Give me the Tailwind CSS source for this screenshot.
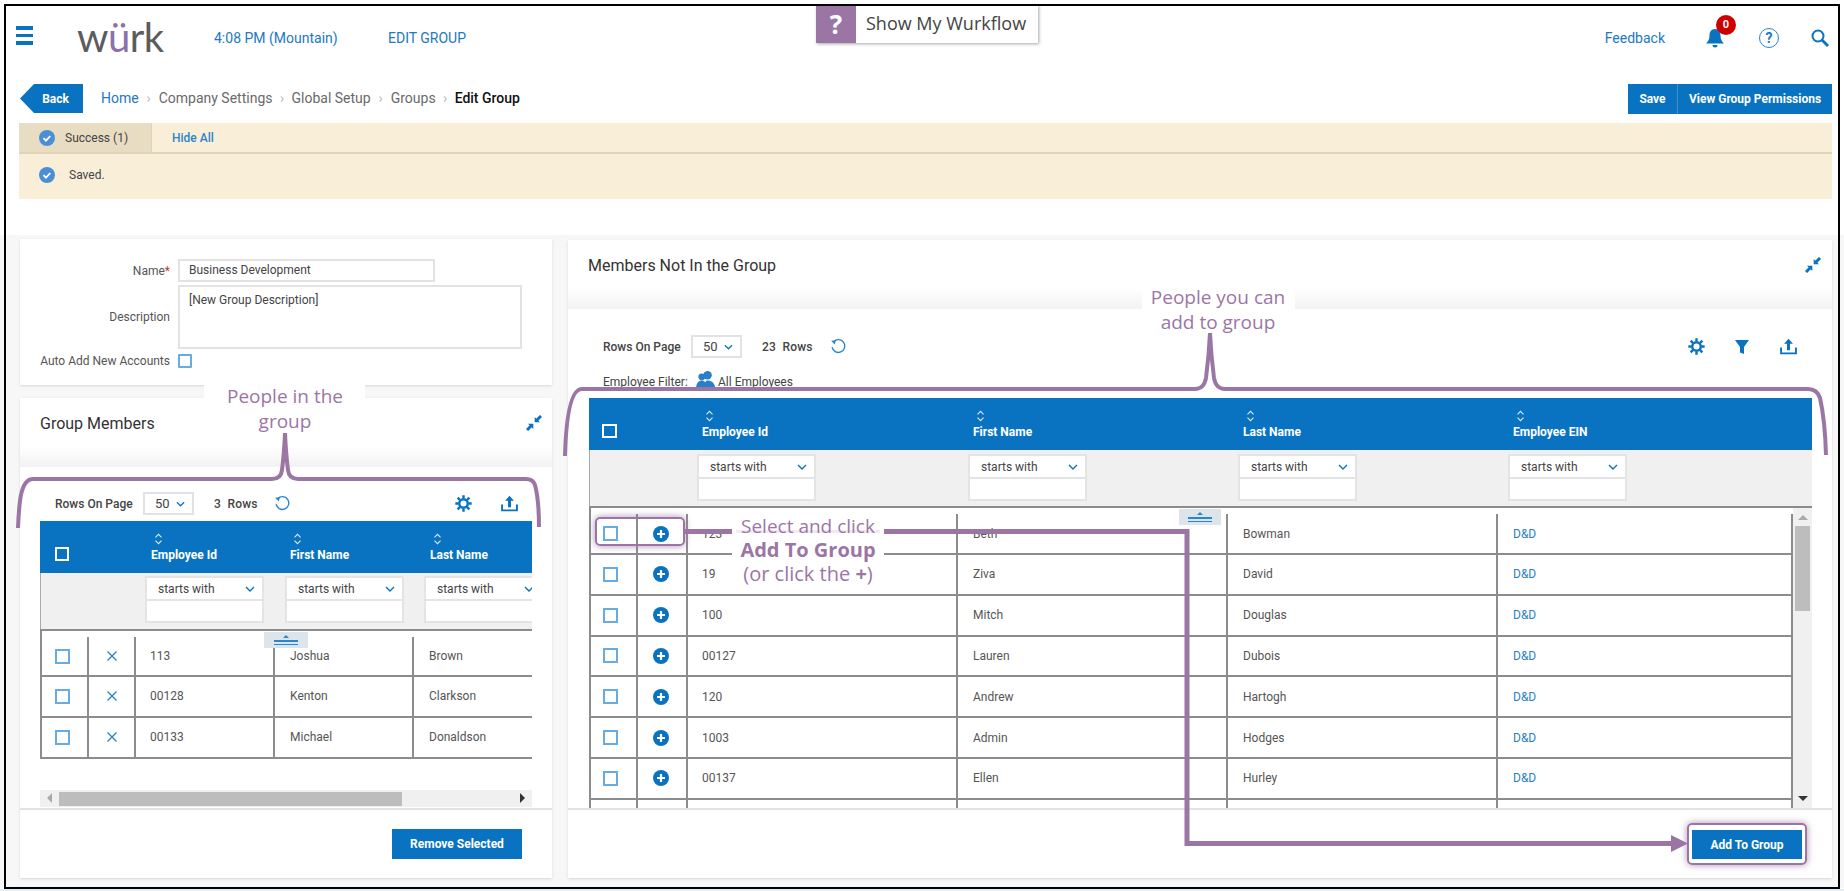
<!DOCTYPE html>
<html>
<head>
<meta charset="utf-8">
<script src="https://cdn.jsdelivr.net/npm/@tailwindcss/browser@4"></script>
</head>
<body class="m-0">
<svg class="hidden">
  <symbol id="check" viewBox="0 0 16 16"><circle cx="8" cy="8" r="8" fill="#4a8fd6"/><path d="M4.500 8.200l2.400 2.400 4.400-4.600" fill="none" stroke="#fff" stroke-width="1.800"/></symbol>
  <symbol id="pin" viewBox="0 0 16 16"><path d="M8.700 7.300V2l5.300 5.300z" fill="#0a73c1"/><path d="M11 5l4-4" stroke="#0a73c1" stroke-width="3"/><path d="M7.300 8.700V14L2 8.700z" fill="#0a73c1"/><path d="M5 11l-4 4" stroke="#0a73c1" stroke-width="3"/></symbol>
  <symbol id="gear" viewBox="0 0 16 16"><circle cx="8" cy="8" r="4" fill="none" stroke="#0a73c1" stroke-width="2.300"/><path d="M8 .3v3M8 12.700v3M.3 8h3M12.700 8h3M2.500 2.500l2.300 2.300M11.200 11.200l2.300 2.300M2.500 13.500l2.300-2.300M11.200 4.800l2.300-2.300" stroke="#0a73c1" stroke-width="2.300"/></symbol>
  <symbol id="upload" viewBox="0 0 16 16"><path d="M1 9v5.500h14V9" fill="none" stroke="#0a73c1" stroke-width="1.800"/><path d="M8 11.500V4" stroke="#0a73c1" stroke-width="2.800"/><path d="M3.800 5.500L8 .8l4.200 4.700z" fill="#0a73c1"/></symbol>
  <symbol id="refresh" viewBox="0 0 16 16"><path d="M3.500 3.500A6 6 0 1 1 2 8.500" fill="none" stroke="#2a86cf" stroke-width="1.300"/><path d="M1 2.500l4.500-.5-1 4.200z" fill="#2a86cf"/></symbol>
  <symbol id="sort" viewBox="0 0 10 14"><path d="M1.500 5L5 1.500 8.500 5M1.500 9L5 12.500 8.500 9" fill="none" stroke="#dbe9f5" stroke-width="1.300"/></symbol>
  <symbol id="chev" viewBox="0 0 10 6"><path d="M1 1l4 4 4-4" fill="none" stroke="#0a73c1" stroke-width="1.400"/></symbol>
  <symbol id="plus" viewBox="0 0 16 16"><circle cx="8" cy="8" r="8" fill="#0a73c1"/><path d="M8 4v8M4 8h8" stroke="#fff" stroke-width="2.200"/></symbol>
  <symbol id="x" viewBox="0 0 12 12"><path d="M1.500 1.500l9 9M10.500 1.500l-9 9" stroke="#2a86cf" stroke-width="1.400"/></symbol>
</svg>

<div class="relative w-[1844px] h-[891px] overflow-hidden bg-white font-['Roboto',sans-serif] text-[12px] text-[#555]">

  <header class="flex items-center h-[66px] mt-[5px] pl-[16px] pr-[15px] text-[14px] text-[#2278c3]">
    <div class="w-[17px] flex flex-col gap-[4px] mr-[44px] -mt-[5px]">
      <span class="block h-[3.500px] bg-[#0a73c1]"></span><span class="block h-[3.500px] bg-[#0a73c1]"></span><span class="block h-[3.500px] bg-[#0a73c1]"></span>
    </div>
    <div class="w-[137px] font-['Lato',sans-serif] font-normal text-[40px] tracking-[-.5px] leading-none text-[#5c5c5c] -mt-[3px]">w<span class="text-[#8b72ad]">ü</span>rk</div>
    <div class="w-[174px]">4:08 PM (Mountain)</div>
    <div>EDIT GROUP</div>
    <div class="ml-auto mr-[40px]">Feedback</div>
    <div class="relative w-[20px] h-[20px] mr-[34px]">
      <svg viewBox="0 0 20 20" class="w-[20px] h-[20px]"><path d="M10 1c4 0 5.500 3 5.500 6.500 0 4 1.500 6 3.500 8H1c2-2 3.500-4 3.500-8C4.500 4 6 1 10 1z" fill="#0a73c1"/><path d="M7.500 17h5a2.500 2.500 0 0 1-5 0z" fill="#0a73c1"/></svg>
      <span class="absolute -top-[13px] left-[11px] w-[20px] h-[20px] rounded-full bg-[#cc0000] text-white text-[11px] font-bold flex items-center justify-center">0</span>
    </div>
    <div class="w-[20px] h-[20px] rounded-full border-[1.500px] border-[#2a86cf] flex items-center justify-center font-bold text-[14px] mr-[32px]">?</div>
    <svg viewBox="0 0 18 18" class="w-[18px] h-[18px]"><circle cx="7" cy="7" r="5.500" fill="none" stroke="#0a73c1" stroke-width="2"/><path d="M11 11l6 6" stroke="#0a73c1" stroke-width="2.800"/></svg>
  </header>

  <div class="flex items-center h-[30px] mt-[13px] pl-[20px] pr-[12px] text-[14px]">
    <div class="w-[63px] h-[29px] bg-[#0a73c1] text-white text-[12px] font-bold flex items-center justify-center pl-[8px] -mt-[1px] [clip-path:polygon(14px_0,100%_0,100%_100%,14px_100%,0_50%)]">Back</div>
    <nav class="flex items-center ml-[18px] -mt-[1px] text-[#6a6a6a]">
      <span class="text-[#2278c3]">Home</span><span class="w-[20px] text-center text-[#bbb]">›</span>
      <span>Company Settings</span><span class="w-[19px] text-center text-[#bbb]">›</span>
      <span>Global Setup</span><span class="w-[20px] text-center text-[#bbb]">›</span>
      <span>Groups</span><span class="w-[19px] text-center text-[#bbb]">›</span>
      <span class="font-medium text-[#111]">Edit Group</span>
    </nav>
    <div class="ml-auto flex h-[30px] bg-[#0a73c1] text-white font-bold text-[12px]">
      <div class="w-[50px] flex items-center justify-center border-r border-[#3f8fcf] pb-[1px]">Save</div>
      <div class="w-[154px] flex items-center justify-center pb-[1px]">View Group Permissions</div>
    </div>
  </div>

  <section class="ml-[19px] mr-[12px] mt-[9px] h-[76px] bg-[#f9efd9]">
    <div class="flex items-center h-[31px] border-b-2 border-[#dfd3b8]">
      <div class="w-[133px] h-full bg-[#e8dcc2] border-r border-[#dfd3b8] flex items-center pl-[20px] gap-[10px] text-[#444]">
        <svg class="w-[16px] h-[16px]"><use href="#check"/></svg>Success (1)
      </div>
      <div class="ml-[20px] font-medium text-[#2a86c8]">Hide All</div>
    </div>
    <div class="flex items-center pl-[20px] gap-[14px] mt-[12px] text-[#444]">
      <svg class="w-[16px] h-[16px]"><use href="#check"/></svg>Saved.
    </div>
  </section>

  <main class="mt-[36px] h-[653px] bg-[#f7f7f7] pt-[4px] pl-[20px] pr-[12px] flex gap-[16px]">
    <!-- left column -->
    <div class="w-[532px] flex flex-col gap-[13px]">
      <div class="h-[146px] bg-white shadow-sm relative">
        <div class="flex items-start pt-[20px]">
          <div class="w-[150px] text-right h-[23px] leading-[25px] text-[#555]">Name<span class="text-[#c0392b]">*</span></div>
          <div class="ml-[8px] w-[257px] h-[23px] border-2 border-[#e2e2e2] pl-[9px] leading-[19px] text-[#444]">Business Development</div>
        </div>
        <div class="flex items-center mt-[3px]">
          <div class="w-[150px] text-right">Description</div>
          <div class="ml-[8px] w-[344px] h-[64px] border-2 border-[#e2e2e2] pl-[9px] pt-[3px] text-[#444] leading-[20px]">[New Group Description]</div>
        </div>
        <div class="flex items-center mt-[3px]">
          <div class="w-[150px] text-right whitespace-nowrap">Auto Add New Accounts</div>
          <div class="ml-[8px] w-[14px] h-[14px] border-2 border-[#66abe3] rounded-[1px]"></div>
        </div>
      </div>

      <div class="h-[480px] bg-white shadow-sm flex flex-col">
        <div class="h-[69px] flex items-start justify-between pl-[20px] pr-[10px] pt-[16px] bg-gradient-to-b from-white from-70% to-[#f2f2f2]">
          <h2 class="text-[16px] text-[#333] leading-[20px]">Group Members</h2>
          <svg class="w-[16px] h-[16px] mt-[1px]"><use href="#pin"/></svg>
        </div>
        <div class="flex items-center h-[23px] mt-[25px] ml-[35px] mr-[29px]">
          <span class="font-medium text-[#444] w-[88px]">Rows On Page</span>
          <div class="w-[51px] h-[23px] border-2 border-[#e2e2e2] flex items-center pl-[10px] gap-[6px] text-[#444] text-[13px]">50<svg class="w-[9px] h-[6px]"><use href="#chev"/></svg></div>
          <span class="ml-[20px] text-[#444] font-medium tracking-[.2px] w-[60px]">3&nbsp;&nbsp;Rows</span>
          <svg class="w-[17px] h-[17px]"><use href="#refresh"/></svg>
          <svg class="w-[17px] h-[17px] ml-auto mr-[29px]"><use href="#gear"/></svg>
          <svg class="w-[17px] h-[17px] mr-[5px]"><use href="#upload"/></svg>
        </div>
        <div class="w-[492px] ml-[20px] mt-[6px] overflow-hidden relative">
          <div class="grid grid-cols-[95px_140px_139px_118px] h-[52px] bg-[#0a73c1] text-white font-bold pt-[12px]">
            <div class="pl-[15px] pt-[14px]"><div class="w-[14px] h-[14px] border-2 border-white"></div></div>
            <div class="pl-[16px]"><svg class="w-[9px] h-[12px] ml-[3px] block"><use href="#sort"/></svg><div class="mt-[3px] leading-[14px]">Employee Id</div></div>
            <div class="pl-[15px]"><svg class="w-[9px] h-[12px] ml-[3px] block"><use href="#sort"/></svg><div class="mt-[3px] leading-[14px]">First Name</div></div>
            <div class="pl-[16px]"><svg class="w-[9px] h-[12px] ml-[3px] block"><use href="#sort"/></svg><div class="mt-[3px] leading-[14px]">Last Name</div></div>
          </div>
          <div class="grid grid-cols-[95px_140px_139px_118px] h-[56px] bg-[#f0f0f0] pt-[3px] text-[#444] border-l border-[#aaa]">
            <div></div>
            <div class="pl-[9px]"><div class="w-[119px] h-[47px] bg-white border-2 border-[#e4e4e4]"><div class="h-[23px] border-b-2 border-[#e4e4e4] flex items-center justify-between pl-[11px] pr-[7px]">starts with<svg class="w-[10px] h-[6px]"><use href="#chev"/></svg></div></div></div>
            <div class="pl-[9px]"><div class="w-[119px] h-[47px] bg-white border-2 border-[#e4e4e4]"><div class="h-[23px] border-b-2 border-[#e4e4e4] flex items-center justify-between pl-[11px] pr-[7px]">starts with<svg class="w-[10px] h-[6px]"><use href="#chev"/></svg></div></div></div>
            <div class="pl-[9px]"><div class="w-[119px] h-[47px] bg-white border-2 border-[#e4e4e4]"><div class="h-[23px] border-b-2 border-[#e4e4e4] flex items-center justify-between pl-[11px] pr-[7px]">starts with<svg class="w-[10px] h-[6px]"><use href="#chev"/></svg></div></div></div>
          </div>
          <div class="border-t-2 border-l-2 border-[#8c8c8c] [&>div]:grid [&>div]:grid-cols-[47px_47px_139px_139px_118px] [&>div]:border-b-2 [&>div]:border-[#8c8c8c] [&>div]:h-[40.800px] [&>div>div]:flex [&>div>div]:items-center [&>div>div]:border-r-2 [&>div>div]:border-[#8c8c8c]">
            <div class="!h-[46px] pt-[6px]"><div class="pl-[13px]"><span class="block w-[15px] h-[15px] border-2 border-[#66abe3]"></span></div><div class="justify-center"><svg class="w-[12px] h-[12px]"><use href="#x"/></svg></div><div class="pl-[14px]">113</div><div class="pl-[15px]">Joshua</div><div class="pl-[15px] !border-r-0">Brown</div></div>
            <div><div class="pl-[13px]"><span class="block w-[15px] h-[15px] border-2 border-[#66abe3]"></span></div><div class="justify-center"><svg class="w-[12px] h-[12px]"><use href="#x"/></svg></div><div class="pl-[14px]">00128</div><div class="pl-[15px]">Kenton</div><div class="pl-[15px] !border-r-0">Clarkson</div></div>
            <div><div class="pl-[13px]"><span class="block w-[15px] h-[15px] border-2 border-[#66abe3]"></span></div><div class="justify-center"><svg class="w-[12px] h-[12px]"><use href="#x"/></svg></div><div class="pl-[14px]">00133</div><div class="pl-[15px]">Michael</div><div class="pl-[15px] !border-r-0">Donaldson</div></div>
          </div>
          <div class="absolute left-[224px] top-[111px] w-[44px] h-[16px] bg-[#dde5ec] flex flex-col items-center justify-center gap-[2px]">
            <span class="block w-0 h-0 border-x-[3px] border-x-transparent border-b-[3px] border-b-[#2a86cf]"></span><span class="block w-[24px] h-[1.500px] bg-[#2a86cf]"></span><span class="block w-[24px] h-[1.500px] bg-[#2a86cf]"></span>
          </div>
        </div>
        <div class="w-[492px] ml-[20px] mt-[31px] h-[17px] bg-[#f0f0f0] flex items-center justify-between relative">
          <span class="ml-[7px] w-0 h-0 border-y-[5px] border-y-transparent border-r-[5px] border-r-[#aaa]"></span>
          <span class="absolute left-[19px] top-[2px] w-[343px] h-[14px] bg-[#bdbdbd]"></span>
          <span class="mr-[7px] w-0 h-0 border-y-[5px] border-y-transparent border-l-[5px] border-l-[#333]"></span>
        </div>
        <div class="flex-1 mt-[1px] border-t-2 border-[#e2e2e2] flex justify-end items-start pt-[19px] pr-[30px]">
          <button class="w-[130px] h-[30px] bg-[#0a73c1] text-white font-bold text-[12px]">Remove Selected</button>
        </div>
      </div>
    </div>

    <!-- right column -->
    <div class="w-[1264px] h-[638px] mt-[1px] bg-white shadow-sm flex flex-col">
      <div class="h-[69px] flex items-start justify-between pl-[20px] pr-[11px] pt-[16px] bg-gradient-to-b from-white from-70% to-[#f2f2f2]">
        <h2 class="text-[16px] text-[#333] leading-[20px]">Members Not In the Group</h2>
        <svg class="w-[16px] h-[16px] mt-[1px]"><use href="#pin"/></svg>
      </div>
      <div class="flex items-center h-[23px] mt-[26px] ml-[35px] mr-[35px]">
        <span class="font-medium text-[#444] w-[88px]">Rows On Page</span>
        <div class="w-[51px] h-[23px] border-2 border-[#e2e2e2] flex items-center pl-[10px] gap-[6px] text-[#444] text-[13px]">50<svg class="w-[9px] h-[6px]"><use href="#chev"/></svg></div>
        <span class="ml-[20px] text-[#444] font-medium tracking-[.2px] w-[68px]">23&nbsp;&nbsp;Rows</span>
        <svg class="w-[17px] h-[17px]"><use href="#refresh"/></svg>
        <svg class="w-[17px] h-[17px] ml-auto mr-[29px]"><use href="#gear"/></svg>
        <svg viewBox="0 0 16 16" class="w-[16px] h-[16px] mr-[30px]"><path d="M1 1h14L10 8v7l-4-1.500V8z" fill="#0a73c1"/></svg>
        <svg class="w-[17px] h-[17px]"><use href="#upload"/></svg>
      </div>
      <div class="flex items-center ml-[35px] h-[20px] mt-[14px] mb-[6px] text-[#444]">
        <span class="w-[92px]">Employee Filter:</span>
        <svg viewBox="0 0 20 17" class="w-[21px] h-[18px] -mt-[4px]"><circle cx="12" cy="4" r="4" fill="#2a7fc9"/><circle cx="6.500" cy="5.500" r="3.300" fill="#2a7fc9"/><path d="M1 17c0-6 3-8 5.500-8S11 11 11 17zM9 17c0-6 1-8 3-8 3.500 0 7 2 7.500 8z" fill="#2a7fc9"/></svg>
        <span class="ml-[2px]">All Employees</span>
      </div>
      <div class="w-[1223px] ml-[21px] relative">
        <div class="grid grid-cols-[98px_271px_270px_270px_314px] h-[52px] bg-[#0a73c1] text-white font-bold pt-[12px]">
          <div class="pl-[13px] pt-[14px]"><div class="w-[15px] h-[14px] border-2 border-white"></div></div>
          <div class="pl-[15px]"><svg class="w-[9px] h-[12px] ml-[3px] block"><use href="#sort"/></svg><div class="mt-[3px] leading-[14px]">Employee Id</div></div>
          <div class="pl-[15px]"><svg class="w-[9px] h-[12px] ml-[3px] block"><use href="#sort"/></svg><div class="mt-[3px] leading-[14px]">First Name</div></div>
          <div class="pl-[15px]"><svg class="w-[9px] h-[12px] ml-[3px] block"><use href="#sort"/></svg><div class="mt-[3px] leading-[14px]">Last Name</div></div>
          <div class="pl-[15px]"><svg class="w-[9px] h-[12px] ml-[3px] block"><use href="#sort"/></svg><div class="mt-[3px] leading-[14px]">Employee EIN</div></div>
        </div>
        <div class="grid grid-cols-[98px_271px_270px_270px_314px] h-[56px] bg-[#f0f0f0] pt-[4px] text-[#444] border-l border-[#aaa]">
          <div></div>
          <div class="pl-[9px]"><div class="w-[119px] h-[47px] bg-white border-2 border-[#e4e4e4]"><div class="h-[23px] border-b-2 border-[#e4e4e4] flex items-center justify-between pl-[11px] pr-[7px]">starts with<svg class="w-[10px] h-[6px]"><use href="#chev"/></svg></div></div></div>
          <div class="pl-[9px]"><div class="w-[119px] h-[47px] bg-white border-2 border-[#e4e4e4]"><div class="h-[23px] border-b-2 border-[#e4e4e4] flex items-center justify-between pl-[11px] pr-[7px]">starts with<svg class="w-[10px] h-[6px]"><use href="#chev"/></svg></div></div></div>
          <div class="pl-[9px]"><div class="w-[119px] h-[47px] bg-white border-2 border-[#e4e4e4]"><div class="h-[23px] border-b-2 border-[#e4e4e4] flex items-center justify-between pl-[11px] pr-[7px]">starts with<svg class="w-[10px] h-[6px]"><use href="#chev"/></svg></div></div></div>
          <div class="pl-[9px]"><div class="w-[119px] h-[47px] bg-white border-2 border-[#e4e4e4]"><div class="h-[23px] border-b-2 border-[#e4e4e4] flex items-center justify-between pl-[11px] pr-[7px]">starts with<svg class="w-[10px] h-[6px]"><use href="#chev"/></svg></div></div></div>
        </div>
        <div class="flex h-[302px] overflow-hidden border-t-2 border-[#8c8c8c]">
          <div class="w-[1204px] border-l-2 border-[#8c8c8c] [&>div]:grid [&>div]:grid-cols-[47px_50px_270px_270px_270px_295px] [&>div]:border-b-2 [&>div]:border-[#8c8c8c] [&>div]:h-[40.800px] [&>div>div]:flex [&>div>div]:items-center [&>div>div]:border-r-2 [&>div>div]:border-[#8c8c8c]">
            <div class="!h-[47px] pt-[6px]"><div class="pl-[12px]"><span class="block w-[15px] h-[15px] border-2 border-[#66abe3]"></span></div><div class="justify-center pr-[2px]"><svg class="w-[16px] h-[16px]"><use href="#plus"/></svg></div><div class="pl-[14px]">123</div><div class="pl-[15px]">Beth</div><div class="pl-[15px]">Bowman</div><div class="pl-[15px] text-[#2a80c8]">D&amp;D</div></div>
            <div><div class="pl-[12px]"><span class="block w-[15px] h-[15px] border-2 border-[#66abe3]"></span></div><div class="justify-center pr-[2px]"><svg class="w-[16px] h-[16px]"><use href="#plus"/></svg></div><div class="pl-[14px]">19</div><div class="pl-[15px]">Ziva</div><div class="pl-[15px]">David</div><div class="pl-[15px] text-[#2a80c8]">D&amp;D</div></div>
            <div><div class="pl-[12px]"><span class="block w-[15px] h-[15px] border-2 border-[#66abe3]"></span></div><div class="justify-center pr-[2px]"><svg class="w-[16px] h-[16px]"><use href="#plus"/></svg></div><div class="pl-[14px]">100</div><div class="pl-[15px]">Mitch</div><div class="pl-[15px]">Douglas</div><div class="pl-[15px] text-[#2a80c8]">D&amp;D</div></div>
            <div><div class="pl-[12px]"><span class="block w-[15px] h-[15px] border-2 border-[#66abe3]"></span></div><div class="justify-center pr-[2px]"><svg class="w-[16px] h-[16px]"><use href="#plus"/></svg></div><div class="pl-[14px]">00127</div><div class="pl-[15px]">Lauren</div><div class="pl-[15px]">Dubois</div><div class="pl-[15px] text-[#2a80c8]">D&amp;D</div></div>
            <div><div class="pl-[12px]"><span class="block w-[15px] h-[15px] border-2 border-[#66abe3]"></span></div><div class="justify-center pr-[2px]"><svg class="w-[16px] h-[16px]"><use href="#plus"/></svg></div><div class="pl-[14px]">120</div><div class="pl-[15px]">Andrew</div><div class="pl-[15px]">Hartogh</div><div class="pl-[15px] text-[#2a80c8]">D&amp;D</div></div>
            <div><div class="pl-[12px]"><span class="block w-[15px] h-[15px] border-2 border-[#66abe3]"></span></div><div class="justify-center pr-[2px]"><svg class="w-[16px] h-[16px]"><use href="#plus"/></svg></div><div class="pl-[14px]">1003</div><div class="pl-[15px]">Admin</div><div class="pl-[15px]">Hodges</div><div class="pl-[15px] text-[#2a80c8]">D&amp;D</div></div>
            <div><div class="pl-[12px]"><span class="block w-[15px] h-[15px] border-2 border-[#66abe3]"></span></div><div class="justify-center pr-[2px]"><svg class="w-[16px] h-[16px]"><use href="#plus"/></svg></div><div class="pl-[14px]">00137</div><div class="pl-[15px]">Ellen</div><div class="pl-[15px]">Hurley</div><div class="pl-[15px] text-[#2a80c8]">D&amp;D</div></div>
            <div><div></div><div></div><div></div><div></div><div></div><div></div></div>
          </div>
          <div class="w-[19px] bg-[#f0f0f0] relative">
            <span class="absolute left-[5px] top-[7px] w-0 h-0 border-x-[5px] border-x-transparent border-b-[5px] border-b-[#aaa]"></span>
            <span class="absolute left-[2px] top-[18px] w-[15px] h-[85px] bg-[#bdbdbd]"></span>
            <span class="absolute left-[5px] top-[288px] w-0 h-0 border-x-[5px] border-x-transparent border-t-[5px] border-t-[#333]"></span>
          </div>
        </div>
        <div class="absolute left-[590px] top-[111px] w-[42px] h-[16px] bg-[#dde5ec] flex flex-col items-center justify-center gap-[2px]">
          <span class="block w-0 h-0 border-x-[3px] border-x-transparent border-b-[3px] border-b-[#2a86cf]"></span><span class="block w-[24px] h-[1.500px] bg-[#2a86cf]"></span><span class="block w-[24px] h-[1.500px] bg-[#2a86cf]"></span>
        </div>
      </div>
      <div class="flex-1 border-t-2 border-[#e2e2e2] flex justify-end items-start pt-[20px] pr-[30px]">
        <button class="w-[110px] h-[29px] bg-[#0a73c1] text-white font-bold text-[12px]">Add To Group</button>
      </div>
    </div>
  </main>

  <!-- Annotation overlay -->
  <div class="absolute left-[816px] top-[5px] w-[222px] h-[38px] bg-white shadow-[1px_1px_3px_rgba(0,0,0,.35)] flex items-center font-['Open_Sans',sans-serif] text-[18px] font-medium text-[#444]">
    <span class="w-[40px] h-full bg-[#9b76a5] text-white text-[26px] font-bold flex items-center justify-center">?</span>
    <span class="ml-[10px] whitespace-nowrap -mt-[1px]">Show My Wurkflow</span>
  </div>

  <div class="absolute left-[204px] top-[385px] w-[161px] h-[13px] bg-white"></div>
  <div class="absolute left-[1142px] top-[290px] w-[153px] h-[19px] bg-white"></div>
  <div class="absolute left-[732px] top-[514px] w-[152px] h-[72px] bg-white"></div>

  <div class="absolute left-[595px] top-[517px] w-[90px] h-[29px] rounded-[5px] border-2 border-[#9b76a5] shadow-[0_0_7px_rgba(155,118,165,.8)]"></div>
  <div class="absolute left-[1687px] top-[823px] w-[120px] h-[42px] rounded-[5px] border-2 border-[#9b76a5] shadow-[0_0_7px_rgba(155,118,165,.8)]"></div>

  <svg class="absolute left-0 top-0 w-[1844px] h-[891px] pointer-events-none" viewBox="0 0 1844 891" fill="none" stroke="#9b76a5" stroke-width="4">
    <path d="M18 528C19 505 20 479 33 479L272 479Q281 479 282 470Q284 455 285 433Q286 455 288 470Q289 479 298 479L526 479Q533 479 535 485Q539 500 539 527"/>
    <path d="M565 456C566 420 570 389 582 389L1195 389Q1204 389 1206 378Q1209 355 1210 333Q1211 355 1214 378Q1216 389 1225 389L1808 389Q1817 389 1820 398Q1825 420 1826 455"/>
    <path d="M685 531.500H732M884 531.500H1187V843.500H1672" stroke-width="5"/>
    <path d="M736 531.500H880" stroke="#f1e9f3" stroke-width="3"/>
    <path d="M1671 835L1688 843.500L1671 852z" fill="#9b76a5" stroke="none"/>
  </svg>

  <div class="absolute left-[185px] top-[384px] w-[200px] text-center font-['Open_Sans',sans-serif] text-[19px] leading-[25px] text-[#9b76a5]">People in the<br>group</div>
  <div class="absolute left-[1118px] top-[285px] w-[200px] text-center font-['Open_Sans',sans-serif] text-[19px] leading-[25px] text-[#9b76a5]">People you can<br>add to group</div>
  <div class="absolute left-[708px] top-[514px] w-[200px] text-center font-['Open_Sans',sans-serif] text-[19px] leading-[24px] text-[#9b76a5]">Select and click<br><b class="text-[20px]">Add To Group</b><br><span class="text-[20px]">(or click the <b>+</b>)</span></div>

  <div class="absolute left-0 top-[889px] w-full h-[2px] bg-[#e3ecf8]"></div>
  <div class="absolute left-[4px] top-[4px] w-[1836px] h-[885px] border-2 border-black pointer-events-none"></div>
</div>
</body>
</html>
